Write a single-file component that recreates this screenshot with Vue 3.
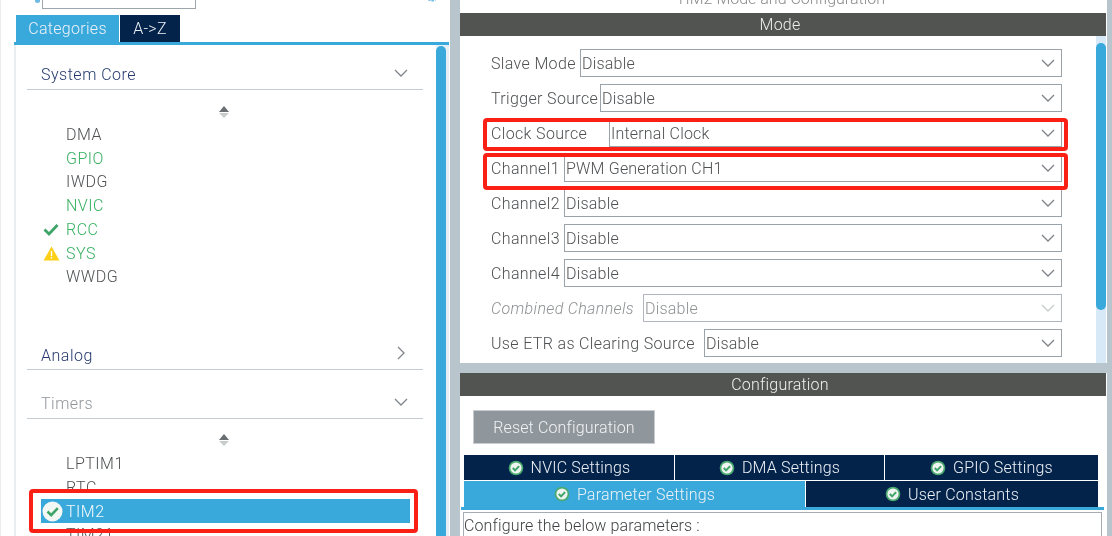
<template>
  <div class="ide">
    <aside class="left">
      <div class="search-bar">
        <span class="search-dot"></span>
        <div class="search-input"></div>
        <svg class="gear" width="16" height="16" viewBox="0 0 16 16"><circle cx="8" cy="8" r="5" fill="none" stroke="#6db9e2" stroke-width="3" stroke-dasharray="2.2 0.8" /></svg>
      </div>
      <div class="cat-tabs">
        <div class="cat-tab active">Categories</div>
        <div class="cat-tab">A-&gt;Z</div>
      </div>
      <div class="blue-line"></div>
      <div class="left-body">
        <div class="tree">
          <div class="head first">
            <span>System Core</span>
            <svg class="chev" width="14" height="8" viewBox="0 0 14 8"><path d="M1 1l6 6 6-6" fill="none" stroke="#80868c" stroke-width="1.3" /></svg>
          </div>
          <div class="sorter"><i class="up"></i><i class="down"></i></div>
          <div v-for="item in coreItems" :key="item.name" class="item" :class="{ ok: item.ok }">
            <span class="slot">
              <svg v-if="item.icon === 'check'" width="16" height="13" viewBox="0 0 16 13"><path d="M1.5 6.5l4.5 4.5 8.5-9" fill="none" stroke="#3fa468" stroke-width="2.8" /></svg>
              <svg v-if="item.icon === 'warn'" width="17" height="15" viewBox="0 0 17 15"><path d="M8.5 0.5l8 14h-16z" fill="#fdd017" /><path d="M8.5 5v5M8.5 11v1.6" stroke="#fff" stroke-width="1.4" /></svg>
            </span>
            {{ item.name }}
          </div>
          <div class="head analog">
            <span>Analog</span>
            <svg class="chev" width="8" height="14" viewBox="0 0 8 14"><path d="M1 1l6 6-6 6" fill="none" stroke="#80868c" stroke-width="1.3" /></svg>
          </div>
          <div class="head timers">
            <span>Timers</span>
            <svg class="chev" width="14" height="8" viewBox="0 0 14 8"><path d="M1 1l6 6 6-6" fill="none" stroke="#80868c" stroke-width="1.3" /></svg>
          </div>
          <div class="sorter small"><i class="up"></i><i class="down"></i></div>
          <div class="item timer">LPTIM1</div>
          <div class="item timer">RTC</div>
          <div class="item timer selected">
            <span class="slot">
              <svg class="big-check" width="21" height="21" viewBox="0 0 21 21"><circle cx="10.5" cy="10.5" r="10" fill="#f4f8f5" /><path d="M5.5 10.5l3.7 3.7 6.6-7" fill="none" stroke="#3fa468" stroke-width="2.6" /></svg>
            </span>
            TIM2
            <span class="red-box"></span>
          </div>
          <div class="item timer">TIM21</div>
        </div>
        <div class="scroll-track"><div class="scroll-thumb"></div></div>
      </div>
    </aside>

    <main class="right">
      <div class="panel-title"><span>TIM2 Mode and Configuration</span></div>
      <div class="dark-head">Mode</div>
      <div class="mode-wrap">
        <div class="mode-rows">
          <div v-for="row in modeRows" :key="row.label" class="mode-row" :class="{ disabled: row.disabled }">
            <label :style="{ width: row.labelWidth + 'px' }">{{ row.label }}</label>
            <div class="select">
              <span>{{ row.value }}</span>
              <svg width="14" height="8" viewBox="0 0 14 8"><path d="M1 1l6 6 6-6" fill="none" stroke="#7d8388" stroke-width="1.3" /></svg>
            </div>
            <span v-if="row.marked" class="red-box" :class="row.marked"></span>
          </div>
        </div>
        <div class="mode-scroll"><div class="mode-thumb"></div></div>
      </div>
      <div class="gap-band"></div>
      <div class="dark-head">Configuration</div>
      <div class="config">
        <button type="button" class="reset">Reset Configuration</button>
        <div class="tabs-top">
          <div v-for="t in topTabs" :key="t.name" class="cfg-tab" :style="{ width: t.width + 'px' }">
            <svg width="16" height="16" viewBox="0 0 16 16"><circle cx="8" cy="8" r="7.3" fill="#4aa96f" /><circle cx="8" cy="8" r="5.6" fill="#eef5f0" /><path d="M4.8 8l2.3 2.4 4-4.3" fill="none" stroke="#3fa468" stroke-width="2" /></svg>
            {{ t.name }}
          </div>
        </div>
        <div class="tabs-bottom">
          <div v-for="t in bottomTabs" :key="t.name" class="cfg-tab" :class="{ active: t.active }" :style="{ width: t.width + 'px' }">
            <svg width="16" height="16" viewBox="0 0 16 16"><circle cx="8" cy="8" r="7.3" fill="#4aa96f" /><circle cx="8" cy="8" r="5.6" fill="#eef5f0" /><path d="M4.8 8l2.3 2.4 4-4.3" fill="none" stroke="#3fa468" stroke-width="2" /></svg>
            {{ t.name }}
          </div>
        </div>
        <div class="cfg-line"></div>
        <div class="params">Configure the below parameters :</div>
      </div>
    </main>
  </div>
</template>

<script setup>
const coreItems = [
  { name: 'DMA' },
  { name: 'GPIO', ok: true },
  { name: 'IWDG' },
  { name: 'NVIC', ok: true },
  { name: 'RCC', ok: true, icon: 'check' },
  { name: 'SYS', ok: true, icon: 'warn' },
  { name: 'WWDG' },
]

const modeRows = [
  { label: 'Slave Mode', value: 'Disable', labelWidth: 89 },
  { label: 'Trigger Source', value: 'Disable', labelWidth: 109 },
  { label: 'Clock Source', value: 'Internal Clock', labelWidth: 118, marked: 'clock' },
  { label: 'Channel1', value: 'PWM Generation CH1', labelWidth: 73, marked: 'channel' },
  { label: 'Channel2', value: 'Disable', labelWidth: 73 },
  { label: 'Channel3', value: 'Disable', labelWidth: 73 },
  { label: 'Channel4', value: 'Disable', labelWidth: 73 },
  { label: 'Combined Channels', value: 'Disable', labelWidth: 152, disabled: true },
  { label: 'Use ETR as Clearing Source', value: 'Disable', labelWidth: 213 },
]

const topTabs = [
  { name: 'NVIC Settings', width: 210 },
  { name: 'DMA Settings', width: 209 },
  { name: 'GPIO Settings', width: 213 },
]

const bottomTabs = [
  { name: 'Parameter Settings', width: 341, active: true },
  { name: 'User Constants', width: 292 },
]
</script>

<style>
html, body {
  margin: 0;
  overflow: hidden;
  background: #fff;
}
</style>

<style scoped>
.ide {
  display: flex;
  width: 1112px;
  height: 536px;
  overflow: hidden;
  background: #fff;
  font-family: Roboto, "Liberation Sans", sans-serif;
  font-size: 16px;
  font-weight: 300;
  letter-spacing: 0.5px;
  color: #4e5052;
  filter: blur(0.35px);
}

/* left pane */
.left {
  width: 450px;
  flex: none;
  box-sizing: border-box;
  padding-left: 14px;
  border-left: 1px solid #e9edef;
  margin-right: 10px;
  display: flex;
  flex-direction: column;
}

.search-bar {
  height: 15px;
  margin-left: -1px;
  flex: none;
  position: relative;
  overflow: hidden;
  display: flex;
  align-items: flex-start;
}

.search-dot {
  width: 5px;
  height: 3px;
  margin: 0 0 0 21px;
  background: #6db9e2;
  border-radius: 0 0 3px 3px;
}

.search-input {
  width: 152px;
  height: 8px;
  margin-left: 2px;
  border: 1px solid #9fa6ab;
  border-top: none;
  box-sizing: content-box;
}

.gear {
  margin: -13px 0 0 228px;
}

.cat-tabs {
  display: flex;
  flex: none;
  height: 27px;
  margin-left: 1px;
  gap: 1px;
}

.cat-tab {
  width: 60px;
  background: #03234b;
  color: #eef2f6;
  letter-spacing: 0.3px;
  display: flex;
  align-items: center;
  justify-content: center;
}

.cat-tab.active {
  width: 103px;
  background: #39a9dc;
}

.blue-line {
  height: 3px;
  flex: none;
  margin: 0 1px 0 -1px;
  background: #39a9dc;
}

.left-body {
  flex: 1;
  display: flex;
  min-height: 0;
  margin: 0 1px 0 -1px;
  border-left: 2px solid #e9edef;
}

.tree {
  flex: 1;
  min-width: 0;
  overflow: hidden;
  padding: 0 13px 0 11px;
}

.head {
  height: 40px;
  box-sizing: border-box;
  border-bottom: 1px solid #c5ccd3;
  padding: 14px 15px 0 14px;
  display: flex;
  justify-content: space-between;
  align-items: flex-start;
  color: #24386c;
}

.head.first {
  height: 45px;
  padding-top: 20px;
}

.head.analog {
  margin-top: 42px;
  padding-top: 16px;
}

.head.timers {
  height: 49px;
  padding-top: 24px;
  color: #8f959a;
}

.head .chev {
  margin-top: 4px;
}

.head.analog .chev {
  margin: 0 3px 0 0;
}

.sorter {
  height: 32px;
  box-sizing: border-box;
  padding-top: 16px;
  display: flex;
  flex-direction: column;
  align-items: center;
  gap: 1px;
  margin-left: -2px;
}

.sorter.small {
  padding-top: 15px;
}

.sorter i {
  width: 0;
  height: 0;
  border-left: 5px solid transparent;
  border-right: 5px solid transparent;
}

.sorter .up {
  border-bottom: 6px solid #6b6e70;
}

.sorter .down {
  border-top: 5px solid #c9cccd;
}

.item {
  height: 23.75px;
  box-sizing: border-box;
  padding-top: 1px;
  margin-left: 14px;
  margin-right: 0;
  display: flex;
  align-items: center;
  color: #4e5052;
  position: relative;
  white-space: nowrap;
}

.item.ok {
  color: #36b061;
}

.slot {
  width: 25px;
  box-sizing: border-box;
  padding-left: 2px;
  flex: none;
  display: flex;
  align-items: center;
}

.big-check {
  margin-left: -1px;
}

.item.timer {
  padding-left: 25px;
}

.item.selected {
  padding-left: 0;
  margin-right: 13px;
  background: #39a9dc;
  color: #f4fafd;
}

.red-box {
  position: absolute;
  box-sizing: border-box;
  border: 4px solid #fb2016;
  border-radius: 4px;
  z-index: 2;
  pointer-events: none;
}

.item .red-box {
  left: -12px;
  right: -8px;
  top: -10px;
  bottom: -10px;
}

/* scrollbars */
.scroll-track {
  width: 13px;
  flex: none;
  background: #e6eff6;
}

.scroll-thumb {
  width: 10px;
  height: 100%;
  margin-top: 1px;
  background: #39a9dc;
  border-radius: 5px 5px 0 0;
}

/* right pane */
.right {
  flex: 1;
  min-width: 0;
  display: flex;
  flex-direction: column;
  position: relative;
  border-right: 5px solid #b8c5cc;
}

.right::before {
  content: "";
  position: absolute;
  left: -10px;
  top: 0;
  bottom: 0;
  width: 10px;
  background: #b8c5cc;
}

.panel-title {
  height: 13px;
  flex: none;
  overflow: hidden;
  display: flex;
  align-items: flex-end;
  justify-content: center;
  color: #8a8c8e;
  letter-spacing: 0;
  margin-right: 6px;
}

.panel-title span {
  line-height: 13px;
  transform: translateY(-8px);
  white-space: nowrap;
}

.dark-head {
  height: 23px;
  flex: none;
  margin-right: 1px;
  padding-right: 6px;
  background: #525452;
  color: #f0f0ee;
  letter-spacing: 0.2px;
  display: flex;
  align-items: center;
  justify-content: center;
}

.mode-wrap {
  height: 327px;
  flex: none;
  margin-right: 1px;
  display: flex;
}

.mode-rows {
  flex: 1;
  padding: 13px 35px 0 31px;
  display: flex;
  flex-direction: column;
  gap: 7px;
  letter-spacing: 0.2px;
}

.mode-row {
  height: 28px;
  display: flex;
  position: relative;
}

.mode-row label {
  flex: none;
  line-height: 30px;
  letter-spacing: 0.35px;
  white-space: nowrap;
}

.mode-row.disabled label {
  font-style: italic;
  color: #8e9092;
}

.select {
  flex: 1;
  box-sizing: border-box;
  border: 1px solid #9aa3aa;
  display: flex;
  align-items: center;
  justify-content: space-between;
  padding: 0 6px 0 1px;
}

.mode-row.disabled .select {
  color: #8e9092;
  border-color: #b0b6bb;
}

.mode-row.disabled svg path {
  stroke: #c6cacc;
}

.red-box.clock {
  left: -8px;
  right: -6px;
  top: -1px;
  bottom: -4px;
}

.red-box.channel {
  left: -8px;
  right: -6px;
  top: -1px;
  bottom: -8px;
}

.mode-scroll {
  width: 10px;
  flex: none;
  margin-left: -1px;
  background: #d7e8f6;
}

.mode-thumb {
  height: 267px;
  margin-top: 7px;
  background: #39a9dc;
  border-radius: 5px;
}

.gap-band {
  height: 10px;
  flex: none;
  background: #b8c5cc;
}

.config {
  flex: 1;
  min-height: 0;
  overflow: hidden;
  padding: 14px 0 0 3px;
  display: flex;
  flex-direction: column;
  letter-spacing: 0.2px;
}

.reset {
  align-self: flex-start;
  flex: none;
  width: 182px;
  height: 34px;
  margin-left: 10px;
  border: 1px solid #c8ccd0;
  background: #8f969c;
  color: #f2f3f4;
  font: inherit;
  letter-spacing: 0.15px;
  padding: 0;
}

.tabs-top,
.tabs-bottom {
  display: flex;
  flex: none;
  height: 25px;
  gap: 1px;
  margin-left: 1px;
}

.tabs-top {
  margin-top: 11px;
  margin-bottom: 1px;
}

.tabs-bottom {
  height: 26px;
}

.cfg-tab {
  background: #03234b;
  color: #eef2f6;
  display: flex;
  align-items: center;
  justify-content: center;
  gap: 7px;
  flex: none;
}

.cfg-tab.active {
  background: #39a9dc;
}

.cfg-line {
  flex: none;
  height: 3px;
  margin-right: 3px;
  margin-left: -2px;
  background: #39a9dc;
}

.params {
  flex: none;
  height: 40px;
  margin: 2px 5px 0 0;
  box-sizing: border-box;
  border: 1px solid #a6acb1;
  padding: 3px 0 0 0;
  color: #3e4042;
  letter-spacing: 0.13px;
  white-space: nowrap;
}
</style>
